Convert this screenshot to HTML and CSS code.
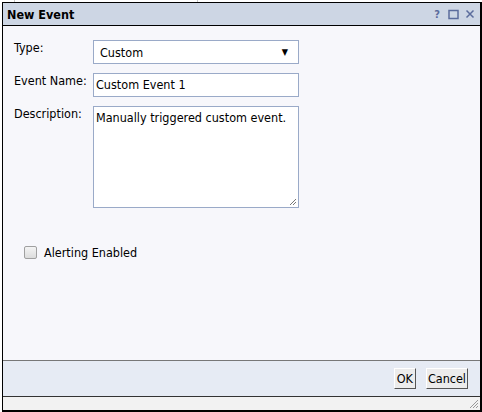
FILE: index.html
```html
<!DOCTYPE html>
<html>
<head>
<meta charset="utf-8">
<link rel="stylesheet" href="styles.css">
</head>
<body>
<div class="backdrop"><span class="bline b1"></span><span class="bline b2"></span></div>
<div class="window">
  <div class="titlebar">
    <span class="title">New Event</span>
    <span class="tools">
      <span class="tool-help">?</span>
      <svg class="tool" width="11" height="11" viewBox="0 0 11 11"><rect x="1" y="1.5" width="9" height="8" fill="none" stroke="#5b6c9c" stroke-width="1.5"/></svg>
      <svg class="tool" width="10" height="10" viewBox="0 0 10 10"><path d="M1.5 1.5 L8.5 8.5 M8.5 1.5 L1.5 8.5" stroke="#5b6c9c" stroke-width="1.5"/></svg>
    </span>
  </div>
  <div class="content">
    <div class="form">
      <label class="lbl">Type:</label>
      <div class="select"><span>Custom</span><span class="arrow">▼</span></div>
      <label class="lbl">Event Name:</label>
      <div class="input">Custom Event 1</div>
      <label class="lbl">Description:</label>
      <div class="textarea">Manually triggered custom event.
        <svg class="grip" width="8" height="8" viewBox="0 0 8 8"><path d="M7 1 L1 7 M7 4 L4 7" stroke="#777" stroke-width="1"/></svg>
      </div>
    </div>
    <div class="check-row">
      <span class="checkbox"></span>
      <span class="check-label">Alerting Enabled</span>
    </div>
  </div>
  <div class="footer">
    <button class="btn btn-ok">OK</button>
    <button class="btn">Cancel</button>
  </div>
  <div class="status">
    <svg class="sgrip" width="10" height="10" viewBox="0 0 10 10"><path d="M9 1 L1 9 M9 4 L4 9 M9 7 L7 9" stroke="#999" stroke-width="1"/></svg>
  </div>
</div>
</body>
</html>
```
FILE: styles.css
```css
html, body {
  margin: 0;
  padding: 0;
  background: #ffffff;
  width: 482px;
  height: 412px;
  overflow: hidden;
  font-family: "DejaVu Sans Condensed", "DejaVu Sans", Tahoma, sans-serif;
  font-size: 12.5px;
  color: #000;
}
.backdrop {
  position: absolute;
  left: 0;
  top: 0;
  width: 482px;
  height: 2px;
}
.bline {
  position: absolute;
  top: 0;
  width: 1px;
  height: 2px;
  background: #c8c8c8;
}
.b1 { left: 14px; }
.b2 { left: 197px; }
.window {
  margin: 2px 0 0 2px;
  width: 477px;
  height: 407px;
  border: 1px solid #000;
  border-right-width: 2px;
  border-bottom-width: 2px;
  display: flex;
  flex-direction: column;
  background: #f7f7fb;
}
.titlebar {
  height: 22px;
  background: #cdd6e4;
  border-bottom: 1px solid #000;
  display: flex;
  align-items: center;
  justify-content: space-between;
  padding: 0 5px 0 4px;
}
.title {
  font-weight: bold;
  font-size: 12.5px;
  color: #000;
}
.tools {
  display: flex;
  align-items: center;
  gap: 6px;
}
.tool-help {
  color: #5b6c9c;
  font-weight: bold;
  font-size: 11px;
  margin-right: 2px;
}
.content {
  flex: 1;
  padding: 14px 0 0 11px;
}
.form {
  display: grid;
  grid-template-columns: 79px 206px;
  row-gap: 9px;
}
.lbl {
  padding-top: 0;
  font-size: 12.5px;
}
.select, .input, .textarea {
  border: 1px solid #9aaac8;
  background: #fff;
  box-sizing: border-box;
}
.select {
  height: 24px;
  display: flex;
  align-items: center;
  justify-content: space-between;
  padding: 0 10px 0 6px;
}
.arrow {
  font-size: 9px;
  color: #000;
}
.input {
  height: 24px;
  line-height: 22px;
  padding-left: 2px;
}
.textarea {
  height: 102px;
  padding: 3px 2px;
  position: relative;
}
.grip {
  position: absolute;
  right: 1px;
  bottom: 1px;
}
.check-row {
  display: flex;
  align-items: center;
  margin: 37px 0 0 10px;
}
.checkbox {
  width: 11px;
  height: 11px;
  border: 1px solid #a0a0a0;
  border-radius: 2px;
  background: linear-gradient(#f4f4f4, #dcdcdc);
  margin-right: 7px;
}
.check-label {
  font-size: 12.5px;
}
.footer {
  height: 35px;
  border-top: 1px solid #777;
  border-bottom: 1px solid #333;
  background: #e6ebf4;
  display: flex;
  align-items: center;
  justify-content: flex-end;
  padding-right: 12px;
  gap: 10px;
}
.btn {
  font-family: "DejaVu Sans Condensed", "DejaVu Sans", Tahoma, sans-serif;
  font-size: 12.5px;
  height: 21px;
  padding: 0 1px;
  background: #ececec;
  border: 1px solid;
  border-color: #fff #555 #555 #fff;
  color: #000;
}
.btn-ok {
  min-width: 22px;
}
.status {
  height: 13px;
  background: #f2f2f2;
  position: relative;
}
.sgrip {
  position: absolute;
  right: 1px;
  bottom: 1px;
}
```
